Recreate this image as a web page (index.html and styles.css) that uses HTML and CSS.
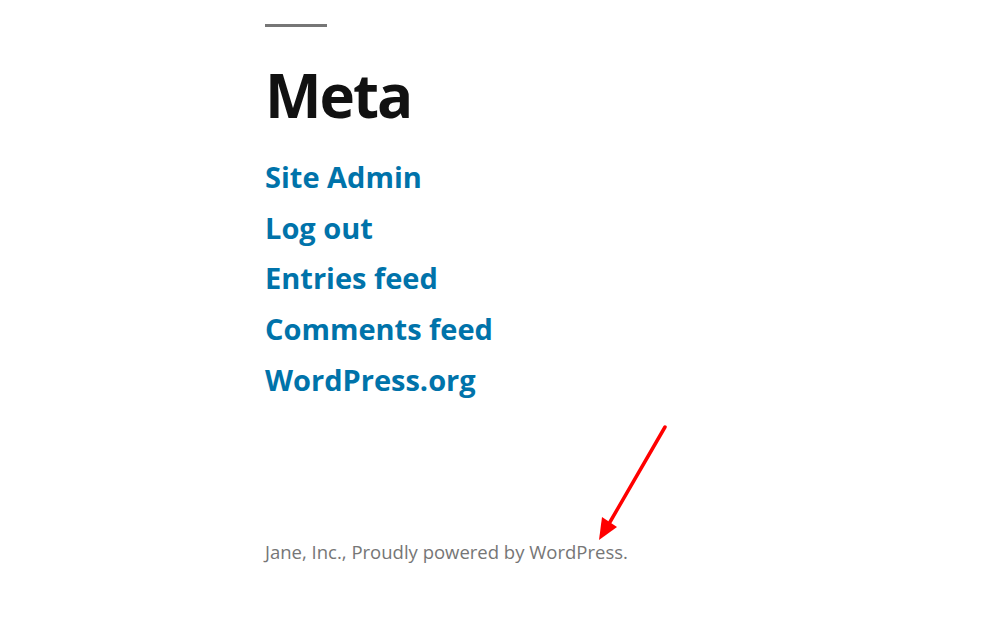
FILE: index.html
```html
<!DOCTYPE html>
<html lang="en">
<head>
  <meta charset="UTF-8">
  <title>Meta</title>
  <link rel="stylesheet" href="styles.css">
</head>
<body>
  <div class="site">
    <section class="widget">
      <hr class="widget-sep">
      <h2 class="widget-title">Meta</h2>
      <ul class="meta-links">
        <li><a href="#">Site Admin</a></li>
        <li><a href="#">Log out</a></li>
        <li><a href="#">Entries feed</a></li>
        <li><a href="#">Comments feed</a></li>
        <li><a href="#">WordPress.org</a></li>
      </ul>
    </section>
    <footer class="site-footer">
      Jane, Inc., Proudly powered by WordPress.
    </footer>
  </div>

  <svg class="annotation" width="998" height="640" viewBox="0 0 998 640">
    <line x1="665" y1="427" x2="610" y2="522" stroke="#ff0000" stroke-width="3.5" stroke-linecap="round"/>
    <polygon points="599,540 602,517 617,527" fill="#ff0000"/>
  </svg>
</body>
</html>
```

FILE: styles.css
```css
body {
  margin: 0;
  background: #fff;
  font-family: 'Open Sans', 'Noto Sans', Arial, sans-serif;
  color: #111;
}
.site {
  padding: 24px 0 0 265px;
  width: 470px;
}
.widget-sep {
  width: 62px;
  height: 3px;
  margin: 0;
  border: none;
  background: #767676;
}
.widget-title {
  font-size: 60px;
  font-weight: 700;
  line-height: 1;
  margin: 38px 0 27px;
  letter-spacing: -2px;
}
.meta-links {
  list-style: none;
  margin: 0;
  padding: 0;
}
.meta-links li {
  font-size: 29px;
  font-weight: 700;
  line-height: 50.7px;
}
.meta-links a {
  color: #0073aa;
  text-decoration: none;
}
.site-footer {
  margin-top: 133px;
  font-size: 18.5px;
  color: #767676;
}
.annotation {
  position: absolute;
  left: 0;
  top: 0;
  pointer-events: none;
}
```
